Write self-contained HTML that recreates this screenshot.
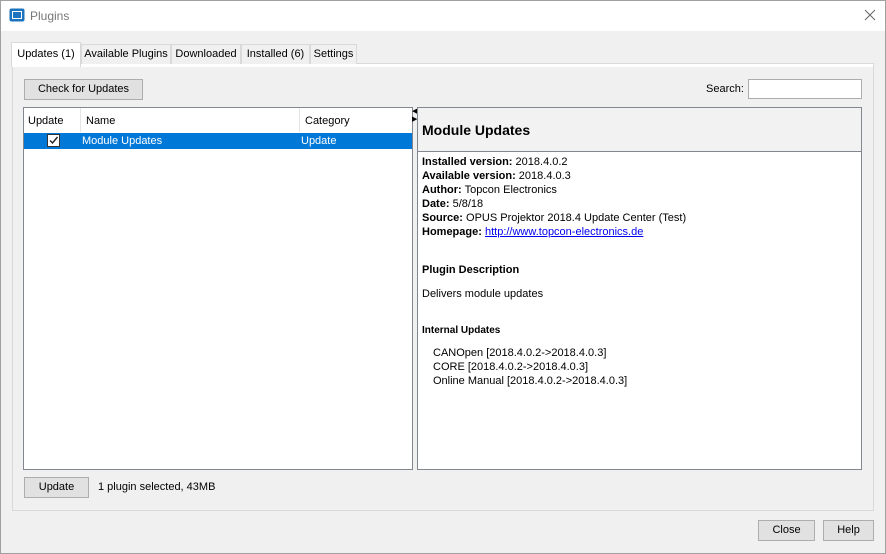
<!DOCTYPE html>
<html><head><style>
*{box-sizing:border-box;margin:0;padding:0}
body{width:886px;height:554px;background:#f0f0f0;font-family:"Liberation Sans",sans-serif;font-size:11px;color:#000;position:relative;overflow:hidden;white-space:nowrap}
.a{position:absolute}
.btn{position:absolute;background:#e1e1e1;border:1px solid #adadad;text-align:center;line-height:19px;font-size:11px}
.tab{position:absolute;top:44px;height:20px;border:1px solid #d9d9d9;border-bottom:none;background:#f0f0f0;line-height:19px;text-align:center;font-size:11px}
b{font-weight:bold}
</style></head><body>
<div class="a" style="left:0;top:0;width:886px;height:554px;border:1px solid #a0a0a0"></div>
<div class="a" style="left:1px;top:1px;width:884px;height:30px;background:#fff"></div>
<svg class="a" style="left:9px;top:8px" width="16" height="14"><rect x="0.5" y="0.5" width="15" height="13" rx="2" fill="#1e73be"/><rect x="3" y="3" width="10" height="8" fill="#fff"/><rect x="4" y="4" width="8" height="6" fill="#1e73be"/></svg>
<div class="a" style="left:30px;top:9px;color:#777;font-size:12px">Plugins</div>
<svg class="a" style="left:864px;top:9px" width="12" height="12"><path d="M1 1L11 11M11 1L1 11" stroke="#666" stroke-width="1"/></svg>
<div class="a" style="left:12px;top:63px;width:862px;height:448px;border:1px solid #d9d9d9;background:#f0f0f0"></div>
<div class="a" style="left:13px;top:64px;width:860px;height:3px;background:#fff"></div>
<div class="tab" style="left:11px;top:42px;width:70px;height:25px;background:#fff;line-height:22px;z-index:2">Updates (1)</div>
<div class="tab" style="left:81px;width:90px">Available Plugins</div>
<div class="tab" style="left:171px;width:70px">Downloaded</div>
<div class="tab" style="left:241px;width:69px">Installed (6)</div>
<div class="tab" style="left:310px;width:47px">Settings</div>
<div class="btn" style="left:24px;top:79px;width:119px;height:21px">Check for Updates</div>
<div class="a" style="left:706px;top:83px">Search:</div>
<div class="a" style="left:748px;top:79px;width:114px;height:20px;background:#fff;border:1px solid #adadad"></div>
<div class="a" style="left:23px;top:107px;width:390px;height:363px;background:#fff;border:1px solid #828790"></div>
<div class="a" style="left:80px;top:108px;width:1px;height:24px;background:#e5e5e5"></div>
<div class="a" style="left:299px;top:108px;width:1px;height:24px;background:#e5e5e5"></div>
<div class="a" style="left:28px;top:115px">Update</div>
<div class="a" style="left:86px;top:115px">Name</div>
<div class="a" style="left:305px;top:115px">Category</div>
<div class="a" style="left:24px;top:133px;width:388px;height:16px;background:#0078d7"></div>
<div class="a" style="left:47px;top:134px;width:13px;height:13px;background:#fff;border:1px solid #333"></div>
<svg class="a" style="left:48px;top:135px" width="11" height="11"><path d="M2 5.5L4.5 8L9.5 2" stroke="#222" stroke-width="1.4" fill="none"/></svg>
<div class="a" style="left:82px;top:135px;color:#fff">Module Updates</div>
<div class="a" style="left:301px;top:135px;color:#fff">Update</div>
<div class="a" style="left:412px;top:108px;font-size:7px;line-height:8px">◀<br>▶</div>
<div class="a" style="left:417px;top:107px;width:445px;height:363px;background:#fff;border:1px solid #828790"></div>
<div class="a" style="left:418px;top:108px;width:443px;height:44px;background:#f2f2f2;border-bottom:1px solid #828790"></div>
<div class="a" style="left:422px;top:122px;font-size:14px;font-weight:bold">Module Updates</div>
<div class="a" style="left:422px;top:155px;line-height:14px">
<b>Installed version:</b> 2018.4.0.2<br><b>Available version:</b> 2018.4.0.3<br><b>Author:</b> Topcon Electronics<br><b>Date:</b> 5/8/18<br><b>Source:</b> OPUS Projektor 2018.4 Update Center (Test)<br><b>Homepage:</b> <span style="color:#00e;text-decoration:underline">http://www.topcon-electronics.de</span></div>
<div class="a" style="left:422px;top:264px;font-weight:bold;font-size:11px">Plugin Description</div>
<div class="a" style="left:422px;top:288px">Delivers module updates</div>
<div class="a" style="left:422px;top:325px;font-weight:bold;font-size:10px">Internal Updates</div>
<div class="a" style="left:433px;top:346px;line-height:14px">CANOpen [2018.4.0.2-&gt;2018.4.0.3]<br>CORE [2018.4.0.2-&gt;2018.4.0.3]<br>Online Manual [2018.4.0.2-&gt;2018.4.0.3]</div>
<div class="btn" style="left:24px;top:477px;width:65px;height:21px">Update</div>
<div class="a" style="left:98px;top:481px">1 plugin selected, 43MB</div>
<div class="btn" style="left:758px;top:520px;width:57px;height:21px">Close</div>
<div class="btn" style="left:823px;top:520px;width:51px;height:21px">Help</div>
</body></html>
